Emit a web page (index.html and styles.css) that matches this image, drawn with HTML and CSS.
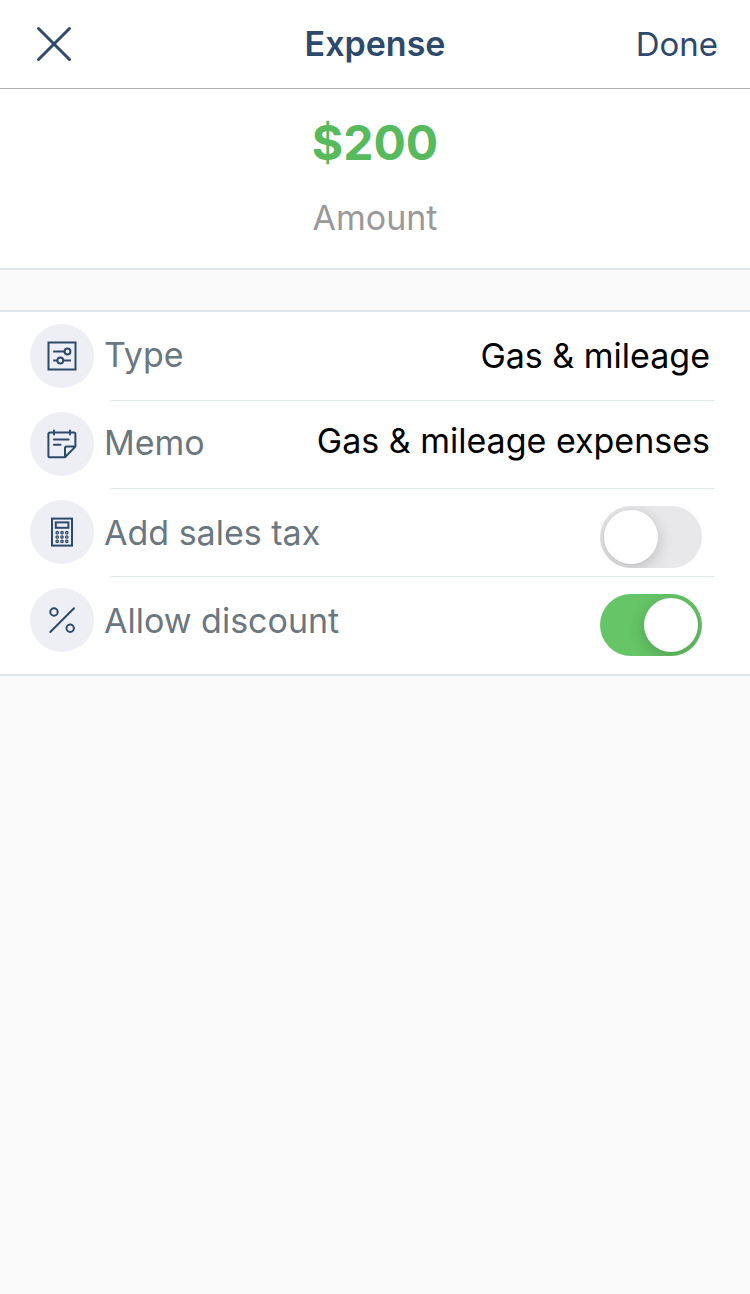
FILE: index.html
```html
<!DOCTYPE html>
<html lang="en">
<head>
<meta charset="utf-8">
<meta name="viewport" content="width=device-width, initial-scale=1">
<title>Expense</title>
<link rel="stylesheet" href="styles.css">
</head>
<body>
<header class="bar">
  <button class="bar-button close" type="button" aria-label="Close">
    <svg width="36" height="36" viewBox="0 0 36 36" fill="none" stroke="currentColor" stroke-width="3" stroke-linecap="round"><path d="M2.500 2.500 33.500 33.500M33.500 2.500 2.500 33.500"/></svg>
  </button>
  <h1 class="title">Expense</h1>
  <button class="bar-button done" type="button">Done</button>
</header>
<main>
  <section class="amount">
    <p class="amount-value">$200</p>
    <p class="amount-label">Amount</p>
  </section>
  <form class="list">
    <div class="row raised">
      <span class="icon">
        <svg width="32" height="32" viewBox="0 0 32 32" fill="none" stroke="currentColor" stroke-width="2"><rect x="2.500" y="2.500" width="27" height="27"/><path d="M7.200 11.500H18.200M7.200 20.500H11.400M17.200 20.500H25"/><circle cx="21.500" cy="11.500" r="2.900"/><circle cx="14.300" cy="20.500" r="2.900"/></svg>
      </span>
      <label class="label" for="type">Type</label>
      <select class="value" id="type"><option>Gas &amp; mileage</option></select>
    </div>
    <div class="row raised">
      <span class="icon">
        <svg width="32" height="32" viewBox="0 0 32 32" fill="none" stroke="currentColor" stroke-width="2" stroke-linecap="round" stroke-linejoin="round"><path d="M19 29.300H4Q2.400 29.300 2.400 27.700V6Q2.400 4.400 4 4.400H27.800Q29.400 4.400 29.400 6V18.600L19 29.300V20.200Q19 18.600 20.600 18.600H29.400"/><path d="M8 2.500V6.500M24 2.500V6.500M8 11.600H22.600M8 16.800H14.500"/></svg>
      </span>
      <label class="label" for="memo">Memo</label>
      <input class="value memo" id="memo" type="text" value="Gas &amp; mileage expenses">
    </div>
    <div class="row">
      <span class="icon">
        <svg width="32" height="32" viewBox="0 0 32 32" fill="none" stroke="currentColor" stroke-width="2"><rect x="6" y="2.600" width="20" height="27"/><rect x="9.800" y="6.400" width="12.600" height="5.400"/><g stroke-width="1.300"><circle cx="11.200" cy="16.700" r="1.200"/><circle cx="16" cy="16.700" r="1.200"/><circle cx="20.800" cy="16.700" r="1.200"/><circle cx="11.200" cy="21" r="1.200"/><circle cx="16" cy="21" r="1.200"/><circle cx="20.800" cy="21" r="1.200"/><circle cx="11.200" cy="25.300" r="1.200"/><circle cx="16" cy="25.300" r="1.200"/><circle cx="20.800" cy="25.300" r="1.200"/></g></svg>
      </span>
      <label class="label" for="tax">Add sales tax</label>
      <input class="switch" id="tax" type="checkbox" role="switch">
    </div>
    <div class="row">
      <span class="icon">
        <svg width="32" height="32" viewBox="0 0 32 32" fill="none" stroke="currentColor" stroke-width="2" stroke-linecap="round"><path d="M4.300 28 28 4.300"/><circle cx="8" cy="8" r="3.700"/><circle cx="24.200" cy="24.200" r="3.700"/></svg>
      </span>
      <label class="label" for="discount">Allow discount</label>
      <input class="switch" id="discount" type="checkbox" role="switch" checked>
    </div>
  </form>
</main>
</body>
</html>
```
FILE: styles.css
```css
* {
  box-sizing: border-box;
}

body {
  margin: 0;
  background: #fafafa;
  color: #2d4a6d;
  font: 400 34px/44px Inter, "Liberation Sans", sans-serif;
}

button,
input,
select {
  margin: 0;
  padding: 0;
  border: 0;
  background: none;
  color: inherit;
  font: inherit;
}

.bar {
  display: grid;
  grid-template-columns: 1fr auto 1fr;
  align-items: center;
  height: 89px;
  padding: 0 32px;
  background: #fff;
  border-bottom: 1px solid #b0b0b2;
}

.bar-button {
  cursor: pointer;
}

.close {
  justify-self: start;
  margin-left: 4px;
}

.close svg {
  display: block;
}

.done {
  justify-self: end;
  font-size: 33px;
}

.title {
  margin: 0;
  font: inherit;
  font-weight: 600;
}

.amount {
  padding: 24px 0;
  background: #fff;
  border-bottom: 2px solid #dfe5e9;
  text-align: center;
}

.amount-value {
  margin: 0;
  color: #57bb5e;
  font-size: 48px;
  font-weight: 700;
  line-height: 60px;
}

.amount-label {
  margin: 0;
  padding: 23px 0 4px;
  color: #999;
}

.list {
  margin-top: 40px;
  padding: 1px 0 9px;
  background: #fff;
  border: solid #dfe5e8;
  border-width: 2px 0;
}

.row {
  display: grid;
  grid-template-columns: 64px auto 1fr;
  grid-template-rows: 64px auto;
  column-gap: 10px;
  align-items: center;
  padding: 11px 40px 0 30px;
}

.row::after {
  grid-column: 1 / -1;
  height: 1px;
  margin: 12px -4px 0 80px;
  background: #dfe7e9;
  content: "";
}

.row:last-child::after {
  background: none;
}

.icon {
  display: grid;
  place-items: center;
  height: 64px;
  border-radius: 50%;
  background: #eeeff4;
}

.label {
  padding-top: 2px;
  color: #6b7780;
}

.raised .label {
  padding: 0 0 2px;
}

.value {
  min-width: 0;
  width: 100%;
  height: 44px;
  appearance: none;
  color: #000;
  text-align: right;
  text-align-last: right;
}

.memo {
  margin-bottom: 6px;
}

.switch {
  justify-self: end;
  width: 102px;
  height: 62px;
  margin: 10px 8px 0 0;
  padding: 4px;
  appearance: none;
  border-radius: 31px;
  background: #e8e8ea;
  overflow: hidden;
  cursor: pointer;
}

.switch::before {
  display: block;
  width: 54px;
  height: 54px;
  border-radius: 50%;
  background: #fff;
  box-shadow: 0 4px 16px rgba(0, 0, 0, 0.2);
  content: "";
}

.switch:checked {
  background: #66c567;
}

.switch:checked::before {
  margin-left: auto;
}
```
